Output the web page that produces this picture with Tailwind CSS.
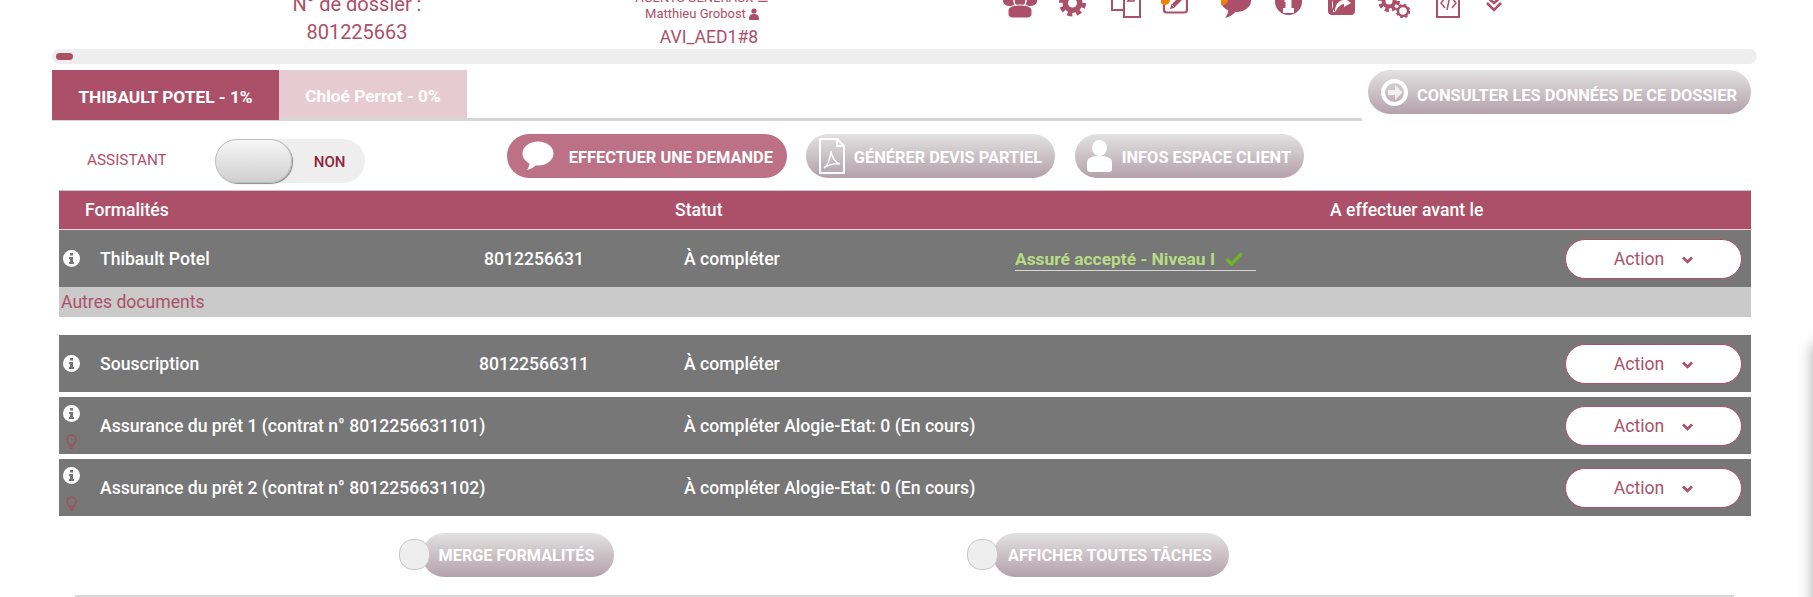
<!DOCTYPE html>
<html lang="fr">
<head>
    <meta charset="UTF-8">
    <meta name="viewport" content="width=device-width, initial-scale=1.0">
    <title>Dossier 801225663</title>
    <script src="https://cdn.jsdelivr.net/npm/@tailwindcss/browser@4"></script>
</head>
<body class="bg-white font-[Roboto] text-[#ab5068]">
<div class="relative h-[597px] w-[1813px] overflow-hidden">

    <!-- Header, cut off by the scroll position -->
    <header class="flex h-[49px] overflow-hidden">
        <div class="ml-[257px] -mt-[10px] w-[200px] text-center text-[20px] leading-[28px]">
            <p>N° de dossier :</p>
            <p>801225663</p>
        </div>
        <div class="ml-[138px] -mt-[10px] w-[220px] shrink-0 text-center">
            <p class="h-[14px] pr-[6px] text-[13px] leading-[16px]">AGENTS GÉNÉRAUX ☰</p>
            <p class="mt-[2px] flex h-[16px] items-center justify-center gap-[3px] pr-[6px] text-[13px] leading-[16px]">Matthieu Grobost
                <svg width="10" height="12" viewBox="0 0 10 12" fill="#ab5068"><circle cx="5" cy="3" r="2.6"/><path d="M0 11c0-4 2-5 5-5s5 1 5 5c0 .6-.4 1-1 1H1c-.6 0-1-.4-1-1z"/></svg>
            </p>
            <p class="mt-[4px] pl-[8px] text-[17.6px] leading-[22px]">AVI_AED1#8</p>
        </div>
        <!-- Toolbar icons: each 30 high, bottom at y=18 -->
        <div class="ml-[188px] -mt-[12px] flex h-[30px] items-start">
            <svg width="34" height="30" viewBox="0 0 34 30" fill="#ab5068">
                <path d="M0 10h34v3c0 3-3 5-8 5H8c-5 0-8-2-8-5z"/>
                <circle cx="17" cy="13" r="6" stroke="#fff" stroke-width="1.5"/>
                <path d="M5 23c0-4 4-6 12-6s12 2 12 6v3c0 2-2 4-4 4H9c-2 0-4-2-4-4z" stroke="#fff" stroke-width="1"/>
            </svg>
            <svg class="ml-[22px]" width="27" height="30" viewBox="0 0 27 30">
                <circle cx="13.500" cy="15" r="10" fill="#ab5068"/>
                <circle cx="13.500" cy="15" r="11.500" fill="none" stroke="#ab5068" stroke-width="4" stroke-dasharray="5 4.03"/>
                <circle cx="13.500" cy="15" r="4.500" fill="#fff"/>
            </svg>
            <svg class="ml-[24px]" width="31" height="30" viewBox="0 0 31 30" fill="#fff" stroke="#ab5068" stroke-width="2">
                <path d="M2 3h16v19H2z"/>
                <path d="M14 11h10l6 0v18H14z"/>
                <path d="M24 7l-6 6h6z" stroke-width="1.500"/>
            </svg>
            <svg class="ml-[20px]" width="27" height="30" viewBox="0 0 27 30">
                <path d="M4 12v12c0 1.500 1 2.500 2.500 2.500h18c1.500 0 2.500-1 2.500-2.500V14" fill="none" stroke="#ab5068" stroke-width="2.200" transform="translate(-1 -2)"/>
                <path d="M9 21l1-4 9-9 3 3-9 9z" fill="#ab5068"/>
                <path d="M11 17l2 2" stroke="#fff" stroke-width="1"/>
                <circle cx="4" cy="12" r="5" fill="#f08000"/>
            </svg>
            <svg class="ml-[33px]" width="30" height="30" viewBox="0 0 30 30" fill="#ab5068">
                <ellipse cx="15" cy="13" rx="15" ry="11"/>
                <path d="M7 20c1 4-1 7-3 10 4-1 8-3 11-7z"/>
                <circle cx="2" cy="12" r="5" fill="#f08000"/>
            </svg>
            <svg class="ml-[24px]" width="27" height="30" viewBox="0 0 27 30">
                <circle cx="13.500" cy="13.500" r="13.500" fill="#ab5068"/>
                <path d="M9.500 9h7v11h2.500v5H8v-5h2.500v-6h-1z" fill="#fff"/>
            </svg>
            <svg class="ml-[26px]" width="27" height="30" viewBox="0 0 27 30">
                <path d="M0 0h27v23c0 2.500-1.500 4-4 4H4c-2.500 0-4-1.500-4-4z" fill="#ab5068"/>
                <path d="M7 24c0-7 3-11 8-12v-3l8 6-7 4v-3c-3 0-6 3-9 8z" fill="#fff"/>
                <path d="M5 12c-2 5-1 9 2 12h-2z" fill="#fff"/>
            </svg>
            <svg class="ml-[22px]" width="33" height="30" viewBox="0 0 33 30">
                <circle cx="12" cy="13" r="7.500" fill="#ab5068"/>
                <circle cx="12" cy="13" r="9" fill="none" stroke="#ab5068" stroke-width="4" stroke-dasharray="4 3.070"/>
                <circle cx="12" cy="13" r="3.500" fill="#fff"/>
                <circle cx="26" cy="23" r="5" fill="none" stroke="#ab5068" stroke-width="2.500"/>
                <circle cx="26" cy="23" r="6" fill="none" stroke="#ab5068" stroke-width="2.500" stroke-dasharray="2.500 2.210"/>
            </svg>
            <svg class="ml-[23px]" width="27" height="30" viewBox="0 0 27 30" fill="none" stroke="#ab5068">
                <path d="M4 0h22v29H4z" stroke-width="2"/>
                <path d="M12 10l-4 5 4 5M19 10l4 5-4 5M17 8l-3 14" stroke-width="1.500"/>
            </svg>
            <svg class="ml-[25px]" width="18" height="30" viewBox="0 0 18 30" fill="none" stroke="#ab5068" stroke-width="2.500">
                <path d="M2 9l7 6 7-6M2 15l7 7 7-7"/>
            </svg>
        </div>
    </header>

    <!-- Progress -->
    <div class="ml-[52px] h-[15px] w-[1705px] rounded-full bg-[#eeeeee] pl-[4px] pt-[4px]">
        <div class="h-[7px] w-[17px] rounded-full bg-[#ab5068]"></div>
    </div>

    <!-- Tabs -->
    <div class="ml-[52px] mt-[6px] flex items-start">
        <div class="flex h-[51px] w-[1310px] border-b-[3px] border-[#d4d6d8]">
            <div class="flex h-[50px] w-[227px] items-center justify-center bg-[#ab5068] pt-[6px] text-[17.3px] font-bold text-white">THIBAULT POTEL - 1%</div>
            <div class="flex h-[48px] w-[188px] items-center justify-center bg-[#e7cbd3] pt-[6px] text-[17.3px] font-bold text-white">Chloé Perrot - 0%</div>
        </div>
        <div class="ml-[6px] flex h-[44px] w-[383px] items-center rounded-[22px] bg-linear-to-b from-[#e2e2e2] to-[#b4a1a9] pl-[13px] text-[16.4px] font-bold text-white">
            <svg class="mr-[9px] shrink-0" width="27" height="27" viewBox="0 0 27 27">
                <circle cx="13.500" cy="13.500" r="11.500" fill="none" stroke="#fff" stroke-width="4"/>
                <path d="M7 11h7V6l7.500 7.500L14 21v-5H7z" fill="#fff" opacity=".75"/>
            </svg>
            <span class="pt-[8px]">CONSULTER LES DONNÉES DE CE DOSSIER</span>
        </div>
    </div>

    <!-- Assistant switch and actions -->
    <div class="mt-[13px] flex h-[49px] items-start">
        <span class="ml-[87px] mt-[18px] text-[15.3px] leading-[16px]">ASSISTANT</span>
        <div class="relative ml-[48px] mt-[5px] h-[44px] w-[150px] rounded-full bg-[#eeeeee]">
            <div class="h-[44px] w-[77px] rounded-[22px] border border-[#bdbdbd] bg-linear-to-b from-[#f7f7f7] to-[#cfcfcf] shadow-[1px_1px_1px_#8a8a8a]"></div>
            <span class="absolute left-[99px] top-[15px] text-[15px] font-medium leading-[16px] text-[#8f2438]">NON</span>
        </div>
        <div class="ml-[142px] flex h-[44px] w-[280px] items-center rounded-[22px] bg-[#bc7186] pl-[15px] text-[16.4px] font-bold text-white">
            <svg class="mr-[15px] shrink-0" width="32" height="30" viewBox="0 0 32 30" fill="#fff">
                <ellipse cx="16" cy="12.500" rx="15.500" ry="12"/>
                <path d="M7 20c1 3 0 6-2 9 4-1 8-3 10-6z"/>
            </svg>
            <span class="pt-[5px]">EFFECTUER UNE DEMANDE</span>
        </div>
        <div class="ml-[19px] flex h-[44px] w-[249px] items-center rounded-[22px] bg-linear-to-b from-[#e2e2e2] to-[#b4a1a9] pl-[13px] text-[16.4px] font-bold text-white">
            <svg class="mr-[9px] shrink-0" width="26" height="36" viewBox="0 0 26 36" fill="none" stroke="#fff" stroke-width="2">
                <path d="M1 1h17l7 7v27H1z"/>
                <path d="M18 1v7h7"/>
                <path d="M5 30c3-2 6-8 7-17 1 7 4 11 9 13-5-1-10 0-16 4z" stroke-width="1.500"/>
            </svg>
            <span class="pt-[5px]">GÉNÉRER DEVIS PARTIEL</span>
        </div>
        <div class="ml-[20px] flex h-[44px] w-[229px] items-center rounded-[22px] bg-linear-to-b from-[#e2e2e2] to-[#b4a1a9] pl-[12px] text-[16.4px] font-bold text-white">
            <svg class="mr-[10px] shrink-0" width="25" height="32" viewBox="0 0 25 32" fill="#fff">
                <ellipse cx="12.500" cy="8" rx="7.500" ry="8"/>
                <path d="M0 23c0-5 4-7 12.500-7S25 18 25 23v6c0 2-1 3-3 3H3c-2 0-3-1-3-3z"/>
            </svg>
            <span class="pt-[5px]">INFOS ESPACE CLIENT</span>
        </div>
    </div>

    <!-- Formalities table -->
    <section class="ml-[59px] mt-[7px] w-[1692px] text-[17.6px] font-medium text-white">
        <div class="grid h-[40px] grid-cols-[590px_655px_421px] items-center border-y border-t-[#c8c8c8] border-b-[#e8d8dc] bg-[#ab5068] pl-[26px]">
            <span>Formalités</span>
            <span>Statut</span>
            <span>A effectuer avant le</span>
        </div>

        <div class="grid h-[57px] grid-cols-[41px_284px_300px_331px_550px_186px] items-center bg-[#777777] [&>span]:pt-[2px]">
            <svg class="ml-[4px]" width="17" height="17" viewBox="0 0 17 17"><circle cx="8.500" cy="8.500" r="8.500" fill="#fff"/><path d="M7 3h3v2.500H7zM6 7h4v5h1v2H6v-2h1V9H6z" fill="#777777"/></svg>
            <span>Thibault Potel</span>
            <span class="text-center">8012256631</span>
            <span>À compléter</span>
            <span class="flex h-[25px] w-[241px] items-center gap-[10px] border-b border-[#d5d5d5] text-[17.4px] font-bold text-[#b8dc85]">Assuré accepté - Niveau I
                <svg width="18" height="14" viewBox="0 0 18 14" fill="none" stroke="#71b32a" stroke-width="3.500"><path d="M1.500 7l5 5L16.500 1.500"/></svg>
            </span>
            <button class="flex h-[40px] w-[177px] items-center justify-center gap-[18px] rounded-[20px] border border-[#ab5068] bg-white pt-[2px] font-normal text-[#ab5068]">Action
                <svg width="11" height="8" viewBox="0 0 11 8" fill="none" stroke="#ab5068" stroke-width="2.600"><path d="M1 1.500l4.500 4.500 4.500-4.500"/></svg>
            </button>
        </div>
        <div class="flex h-[30px] items-center bg-[#cacaca] pl-[2px] font-normal text-[#ab5068]">Autres documents</div>

        <div class="mt-[18px] grid h-[57px] grid-cols-[41px_284px_300px_331px_550px_186px] items-center bg-[#777777] [&>span]:pt-[2px]">
            <svg class="ml-[4px]" width="17" height="17" viewBox="0 0 17 17"><circle cx="8.500" cy="8.500" r="8.500" fill="#fff"/><path d="M7 3h3v2.500H7zM6 7h4v5h1v2H6v-2h1V9H6z" fill="#777777"/></svg>
            <span>Souscription</span>
            <span class="text-center">80122566311</span>
            <span>À compléter</span>
            <span></span>
            <button class="flex h-[40px] w-[177px] items-center justify-center gap-[18px] rounded-[20px] border border-[#ab5068] bg-white pt-[2px] font-normal text-[#ab5068]">Action
                <svg width="11" height="8" viewBox="0 0 11 8" fill="none" stroke="#ab5068" stroke-width="2.600"><path d="M1 1.500l4.500 4.500 4.500-4.500"/></svg>
            </button>
        </div>

        <div class="mt-[5px] grid h-[57px] grid-cols-[41px_584px_881px_186px] items-center bg-[#777777] [&>span]:pt-[2px]">
            <div class="ml-[4px] flex h-[57px] flex-col pt-[8px]">
                <svg width="17" height="17" viewBox="0 0 17 17"><circle cx="8.500" cy="8.500" r="8.500" fill="#fff"/><path d="M7 3h3v2.500H7zM6 7h4v5h1v2H6v-2h1V9H6z" fill="#777777"/></svg>
                <svg class="ml-[3px] mt-[12px]" width="11" height="15" viewBox="0 0 11 15" fill="none" stroke="#a8475f" stroke-width="1.200"><path d="M3.500 10.500C2 9 1 7.500 1 5.500a4.500 4.500 0 0 1 9 0c0 2-1 3.500-2.500 5z"/><path d="M3.500 12.500h4M4.500 14.500h2" stroke-width="1.500"/></svg>
            </div>
            <span>Assurance du prêt 1 (contrat n° 8012256631101)</span>
            <span>À compléter Alogie-Etat: 0 (En cours)</span>
            <button class="flex h-[40px] w-[177px] items-center justify-center gap-[18px] rounded-[20px] border border-[#ab5068] bg-white pt-[2px] font-normal text-[#ab5068]">Action
                <svg width="11" height="8" viewBox="0 0 11 8" fill="none" stroke="#ab5068" stroke-width="2.600"><path d="M1 1.500l4.500 4.500 4.500-4.500"/></svg>
            </button>
        </div>

        <div class="mt-[5px] grid h-[57px] grid-cols-[41px_584px_881px_186px] items-center bg-[#777777] [&>span]:pt-[2px]">
            <div class="ml-[4px] flex h-[57px] flex-col pt-[8px]">
                <svg width="17" height="17" viewBox="0 0 17 17"><circle cx="8.500" cy="8.500" r="8.500" fill="#fff"/><path d="M7 3h3v2.500H7zM6 7h4v5h1v2H6v-2h1V9H6z" fill="#777777"/></svg>
                <svg class="ml-[3px] mt-[12px]" width="11" height="15" viewBox="0 0 11 15" fill="none" stroke="#a8475f" stroke-width="1.200"><path d="M3.500 10.500C2 9 1 7.500 1 5.500a4.500 4.500 0 0 1 9 0c0 2-1 3.500-2.500 5z"/><path d="M3.500 12.500h4M4.500 14.500h2" stroke-width="1.500"/></svg>
            </div>
            <span>Assurance du prêt 2 (contrat n° 8012256631102)</span>
            <span>À compléter Alogie-Etat: 0 (En cours)</span>
            <button class="flex h-[40px] w-[177px] items-center justify-center gap-[18px] rounded-[20px] border border-[#ab5068] bg-white pt-[2px] font-normal text-[#ab5068]">Action
                <svg width="11" height="8" viewBox="0 0 11 8" fill="none" stroke="#ab5068" stroke-width="2.600"><path d="M1 1.500l4.500 4.500 4.500-4.500"/></svg>
            </button>
        </div>
    </section>

    <!-- Bottom toggles -->
    <div class="mt-[17px] flex h-[44px] items-center">
        <div class="relative ml-[422px] flex h-[44px] w-[192px] items-center justify-center rounded-[22px] bg-linear-to-b from-[#e2e2e2] to-[#b4a1a9] pr-[3px] pt-[3px] text-[16.2px] font-bold text-white">
            <span class="absolute -left-[23px] top-[6px] h-[31px] w-[31px] rounded-[14px] border border-[#c8c8c8] bg-[#eeeeee]"></span>
            MERGE FORMALITÉS
        </div>
        <div class="relative ml-[379px] flex h-[44px] w-[236px] items-center justify-center rounded-[22px] bg-linear-to-b from-[#e2e2e2] to-[#b4a1a9] pr-[2px] pt-[3px] text-[16.2px] font-bold text-white">
            <span class="absolute -left-[26px] top-[6px] h-[31px] w-[31px] rounded-[14px] border border-[#c8c8c8] bg-[#eeeeee]"></span>
            AFFICHER TOUTES TÂCHES
        </div>
    </div>
    <hr class="ml-[75px] mt-[18px] w-[1659px] border-t-2 border-[#d8d8d8]">

    <!-- Edge of an off-canvas panel -->
    <div class="absolute left-[1813px] top-[345px] h-[400px] w-[100px] shadow-[0_0_14px_rgba(0,0,0,0.35)]"></div>
</div>
</body>
</html>
